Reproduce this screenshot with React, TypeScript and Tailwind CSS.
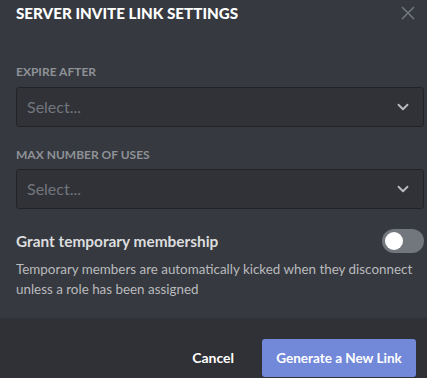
import { ChevronDown, X } from 'lucide-react'

const font = { fontFamily: 'Lato, "Open Sans", sans-serif' }

const SelectBox = () => (
  <div className="flex h-[40px] items-center justify-between rounded-[3px] border border-[#222327] bg-[#303237] pl-[10px] pr-[11px]">
    <span className="text-[16px] text-[#72767d]">Select...</span>
    <ChevronDown className="size-[18px] text-[#b9bbbe]" strokeWidth={2.5} />
  </div>
)

export default function App() {
  return (
    <div className="flex h-[378px] w-[427px] flex-col overflow-hidden bg-[#36393f]" style={font}>
      <div className="flex items-start justify-between pl-4 pr-[8px] pt-[3px]">
        <h1 className="text-[15.2px] leading-[20px] font-black text-white">
          SERVER INVITE LINK SETTINGS
        </h1>
        <X className="-mt-[1px] size-[22px] text-[#72767d]" strokeWidth={1.8} />
      </div>

      <div className="flex flex-col pl-4 pr-[3px]">
        <label className="mt-[40px] text-[12px] leading-[16px] font-bold text-[#8e9297]">
          EXPIRE AFTER
        </label>
        <div className="mt-[7px]">
          <SelectBox />
        </div>

        <label className="mt-[20px] text-[12px] leading-[16px] font-bold text-[#8e9297]">
          MAX NUMBER OF USES
        </label>
        <div className="mt-[6px]">
          <SelectBox />
        </div>

        <div className="mt-[20px] flex items-center justify-between">
          <span className="text-[15.4px] leading-[24px] font-bold text-[#dcddde]">
            Grant temporary membership
          </span>
          <div className="flex h-[24px] w-[42px] items-center rounded-full bg-[#72767d] px-[3px]">
            <div className="size-[18px] rounded-full bg-white" />
          </div>
        </div>
        <p className="mt-[6px] text-[13.4px] leading-[20px] text-[#b9bbbe]">
          Temporary members are automatically kicked when they disconnect unless a role has been
          assigned
        </p>
      </div>

      <div className="mt-auto flex h-[60px] items-start justify-end gap-[28px] bg-[#2f3136] pr-[11px] pt-[21px]">
        <button className="mt-[10px] text-[14px] leading-[18px] font-bold text-white">
          Cancel
        </button>
        <button className="flex h-[38px] w-[154px] items-center justify-center rounded-[3px] bg-[#7289da] text-[13.5px] font-bold text-white">
          Generate a New Link
        </button>
      </div>
    </div>
  )
}
